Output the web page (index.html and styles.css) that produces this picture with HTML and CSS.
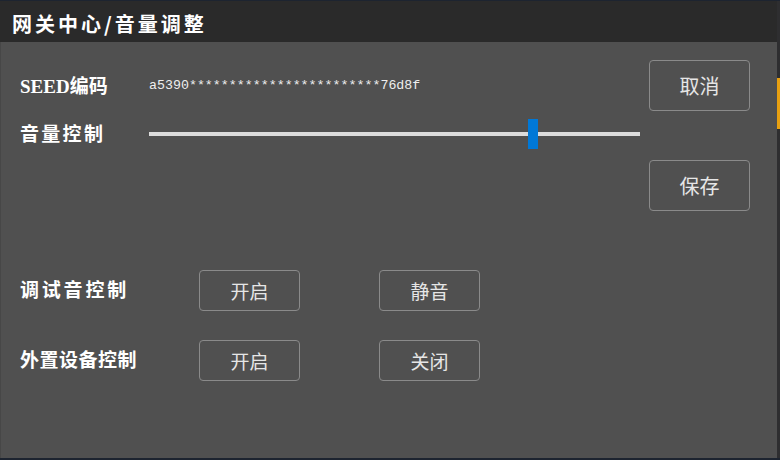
FILE: index.html
```html
<!DOCTYPE html>
<html lang="zh">
<head>
<meta charset="utf-8">
<link rel="stylesheet" href="styles.css">
</head>
<body>
<div class="screen">
  <div class="dialog">
    <div class="titlebar">网关中心/音量调整</div>
    <div class="content">
      <div class="top">
        <div class="fields">
          <div class="row row-seed">
            <div class="label"><span class="latin">SEED</span>编码</div>
            <div class="seed">a5390************************76d8f</div>
          </div>
          <div class="row row-vol">
            <div class="label vol">音量控制</div>
            <div class="slider">
              <div class="track"></div>
              <div class="thumb"></div>
            </div>
          </div>
        </div>
        <div class="actions">
          <div class="btn big">取消</div>
          <div class="btn big">保存</div>
        </div>
      </div>
      <div class="ctrl">
        <div class="ctrl-label debug">调试音控制</div>
        <div class="btn small">开启</div>
        <div class="btn small">静音</div>
      </div>
      <div class="ctrl">
        <div class="ctrl-label">外置设备控制</div>
        <div class="btn small">开启</div>
        <div class="btn small">关闭</div>
      </div>
    </div>
  </div>
  <div class="edge"><div class="edge-mark"></div></div>
</div>
</body>
</html>
```

FILE: styles.css
```css
html, body {
  margin: 0;
  padding: 0;
}
body {
  width: 780px;
  height: 460px;
  background: #1d2430;
  overflow: hidden;
  font-family: "Noto Sans CJK SC", "Noto Sans", sans-serif;
}
.screen {
  display: flex;
  padding-top: 1px;
  height: 459px;
}
.dialog {
  width: 777px;
  height: 457px;
  display: flex;
  flex-direction: column;
}
.titlebar {
  height: 41px;
  background: #2a2a2a;
  color: #ffffff;
  font-size: 20px;
  font-weight: 700;
  letter-spacing: 3px;
  padding-left: 12px;
  line-height: 46px;
  box-sizing: border-box;
}
.content {
  flex: 1;
  background: #505050;
  border-left: 1px solid #474747;
  padding: 18px 0 0 19px;
}
.top {
  display: flex;
  gap: 9px;
}
.fields {
  width: 620px;
  display: flex;
  flex-direction: column;
}
.row {
  display: flex;
  align-items: center;
}
.row-seed {
  height: 51px;
}
.row-vol {
  height: 46px;
}
.label {
  width: 129px;
  color: #ffffff;
  font-size: 19px;
  font-weight: 700;
  padding-bottom: 3px;
}
.latin {
  font-family: "Liberation Serif", serif;
  font-size: 19px;
}
.vol {
  letter-spacing: 2.3px;
}
.seed {
  font-family: "Liberation Mono", monospace;
  font-size: 13.3px;
  color: #eeeeee;
}
.slider {
  position: relative;
  width: 491px;
  height: 30px;
  display: flex;
  align-items: center;
}
.track {
  width: 100%;
  height: 4px;
  background: #dcdcdc;
}
.thumb {
  position: absolute;
  left: 379px;
  top: 0;
  width: 10px;
  height: 30px;
  background: #0078d7;
}
.actions {
  display: flex;
  flex-direction: column;
  gap: 49px;
}
.btn {
  box-sizing: border-box;
  border: 1px solid #8a8a8a;
  border-radius: 4px;
  color: #e6e6e6;
  display: flex;
  align-items: center;
  justify-content: center;
}
.btn.big {
  width: 101px;
  height: 51px;
  font-size: 20px;
}
.btn.small {
  width: 101px;
  height: 41px;
  font-size: 19px;
}
.ctrl {
  display: flex;
  align-items: center;
  margin-top: 29px;
}
.top + .ctrl {
  margin-top: 59px;
}
.ctrl .btn + .btn {
  margin-left: 79px;
}
.ctrl-label {
  width: 179px;
  color: #ffffff;
  font-size: 19px;
  font-weight: 700;
  letter-spacing: 0.5px;
  padding-bottom: 4px;
}
.ctrl-label.debug {
  letter-spacing: 2.8px;
}
.edge {
  width: 3px;
  height: 457px;
  background: #2e2e30;
  padding-top: 77px;
  box-sizing: border-box;
}
.edge-mark {
  width: 3px;
  height: 51px;
  background: #e8a010;
}
```
